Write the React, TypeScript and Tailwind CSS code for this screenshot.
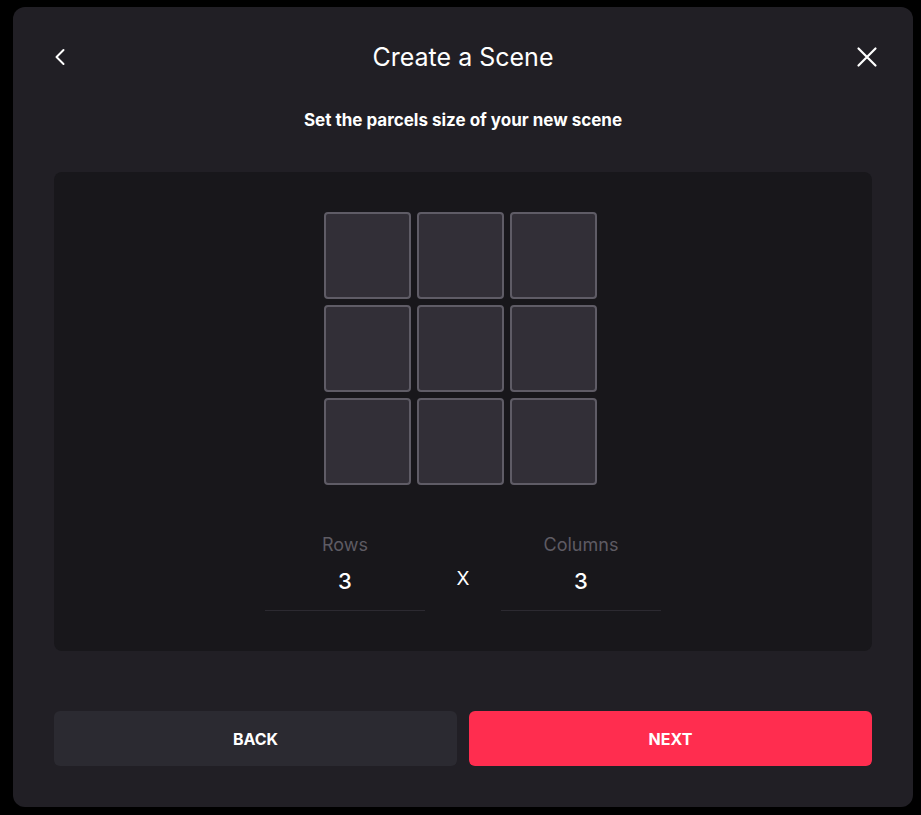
import React from "react";

export default function App() {
  const cells = Array.from({ length: 9 });
  return (
    <div className="w-[921px] h-[815px] bg-black pt-[7px] pl-[13px]" style={{ fontFamily: "Inter, 'Liberation Sans', sans-serif" }}>
      <div className="w-[900px] h-[800px] bg-[#211f25] rounded-[12px] px-[41px] pt-[34px] flex flex-col">
        <div className="relative h-8 flex items-center justify-center">
          <button className="absolute left-0 top-1/2 -translate-y-1/2 w-[12px] h-[18px] flex items-center">
            <svg width="12" height="18" viewBox="0 0 12 18" fill="none">
              <path d="M9.5 2 L2.5 9 L9.5 16" stroke="white" strokeWidth="2" strokeLinecap="round" strokeLinejoin="round" />
            </svg>
          </button>
          <h1 className="text-white text-[25px] leading-8 font-normal">Create a Scene</h1>
          <button className="absolute right-[-6px] top-1/2 -translate-y-1/2 w-[22px] h-[22px] flex items-center justify-center">
            <svg width="22" height="22" viewBox="0 0 22 22" fill="none">
              <path d="M2.5 2.5 L19.5 19.5 M19.5 2.5 L2.5 19.5" stroke="white" strokeWidth="2.2" strokeLinecap="round" />
            </svg>
          </button>
        </div>
        <p className="mt-[35px] text-center text-white text-[17px] leading-6 font-bold">Set the parcels size of your new scene</p>
        <div className="mt-[40px] h-[479px] bg-[#18171b] rounded-[8px] pt-[40px] flex flex-col items-center">
          <div className="mr-[6px] grid grid-cols-[87px_87px_87px] grid-rows-[87px_87px_87px] gap-[6px]">
            {cells.map((_, i) => (
              <div key={i} className="bg-[#322f37] border-2 border-[#5f5c66] rounded-[4px]" />
            ))}
          </div>
          <div className="mt-[48px] flex items-start">
            <div className="w-[160px] flex flex-col items-center">
              <span className="text-[#5e5b63] text-[18px] leading-6">Rows</span>
              <div className="w-full pt-[10px] pb-[15px] border-b border-[#2c2a31] text-center text-white text-[22px] font-medium leading-7">3</div>
            </div>
            <div className="w-[76px] pt-[32px] text-center text-white text-[19px] leading-7">X</div>
            <div className="w-[160px] flex flex-col items-center">
              <span className="text-[#5e5b63] text-[18px] leading-6">Columns</span>
              <div className="w-full pt-[10px] pb-[15px] border-b border-[#2c2a31] text-center text-white text-[22px] font-medium leading-7">3</div>
            </div>
          </div>
        </div>
        <div className="mt-[60px] flex gap-[12px]">
          <button className="flex-1 h-[55px] rounded-[6px] bg-[#2b2a31] text-white text-[16px] font-bold">BACK</button>
          <button className="flex-1 h-[55px] rounded-[6px] bg-[#ff2d4f] text-white text-[16px] font-bold">NEXT</button>
        </div>
      </div>
    </div>
  );
}
